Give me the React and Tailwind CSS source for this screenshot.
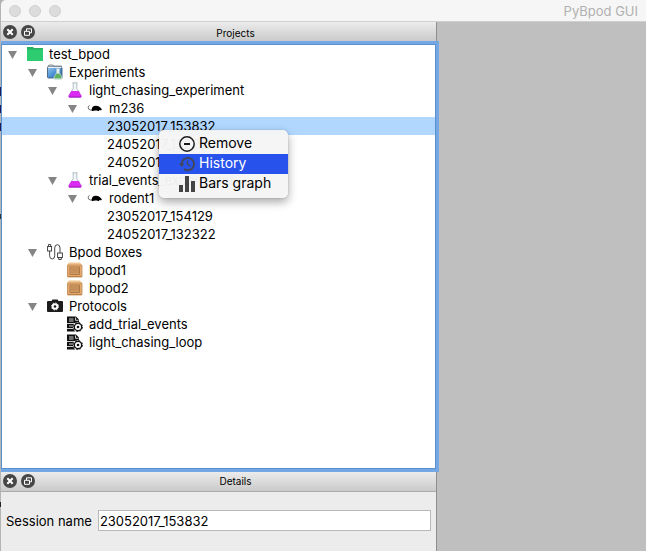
import React from "react";

function GreenFolder() {
  return (
    <svg viewBox="0 0 16 16" className="size-4">
      <path d="M0 1h6l1 1h9v13H0z" fill="#27b063" />
      <path d="M0 3.500h16V15H0z" fill="#2ecc71" />
    </svg>
  );
}

function LabFolder() {
  return (
    <svg viewBox="0 0 16 16" className="size-4">
      <defs>
        <linearGradient id="lab" x1="0" y1="0" x2="1" y2="1">
          <stop offset="0" stopColor="#9cc8ee" />
          <stop offset=".5" stopColor="#4d93d6" />
          <stop offset="1" stopColor="#2b62a6" />
        </linearGradient>
      </defs>
      <path d="M1 3.500V2l1-1h4l1 1h7.500v2z" fill="#cfd3d6" stroke="#5f676e" strokeWidth=".7" />
      <rect x=".5" y="3" width="14.500" height="11" rx="1" fill="url(#lab)" stroke="#44607c" strokeWidth=".9" />
      <path d="M1 3.500h13.500" stroke="#e9eef2" />
      <path d="M9.500 4.500h3v4l3 5.500-1 1.300h-7l-1-1.300 3-5.500z" fill="#e3f0ee" stroke="#a9c3c8" strokeWidth=".5" />
      <path d="M9.300 9.500h3.400l2.100 4.300-.6.700H7.800l-.6-.7z" fill="#62b264" />
    </svg>
  );
}

function Flask() {
  return (
    <svg viewBox="0 0 16 16" className="size-4">
      <path d="M5.500.8h5M6.200 1v5.500L2 13.500q-.7 1.800 1 1.800h10q1.700 0 1-1.800L9.800 6.500V1" fill="#f1f6f8" stroke="#a9b8bf" strokeWidth=".9" />
      <path d="M4.300 9h7.400l2.800 4.800q.5 1.600-1 1.600H2.500q-1.500 0-1-1.600z" fill="#d92bf2" />
      <path d="M2 14.900h12" stroke="#a31fc0" strokeWidth=".9" />
    </svg>
  );
}

function Mouse() {
  return (
    <svg viewBox="0 0 16 16" className="size-4">
      <path d="M2.600 5.500Q1 6 1.200 7.800t2.300 2.200H8" fill="none" stroke="#444" strokeWidth=".8" />
      <path d="M4.600 10Q4.800 5.800 8.800 5.700q3-.1 4.500 1.800l1.500 1.700q.3.800-1 1l-1.800.1v.7h-1.500v-.6H6.500v.5H5z" fill="#000" />
    </svg>
  );
}

function Cable() {
  return (
    <svg viewBox="0 0 16 16" className="size-4" fill="none" stroke="#333" strokeWidth=".9">
      <rect x=".6" y="2.500" width="4" height="4.500" />
      <path d="M1.500 2.500v-2h2.200v2M2.600 7v4.500Q2.600 15 5.200 15T7.700 11.500V4Q7.700.7 10.300.7t2.700 3.300V9" />
      <rect x="10.600" y="9" width="4.800" height="4.500" />
      <path d="M11.700 13.500v2h2.600v-2" />
    </svg>
  );
}

function Crate() {
  return (
    <svg viewBox="0 0 16 16" className="size-4">
      <path d="M2 .5h11L15 3v11.500H0V3z" fill="#f0c592" />
      <rect x=".5" y="3" width="14.500" height="12" rx=".5" fill="#e2aa70" stroke="#c48b54" strokeWidth=".8" />
      <rect x="3" y="5" width="9.500" height="7.500" fill="#dda76f" stroke="#a36c3a" strokeWidth=".8" />
      <path d="M5 6v5.500M7 6v5.500M9 6v5.500M11 6v5.500" stroke="#a36c3a" strokeWidth=".8" />
      <path d="M1 14.500h13.500" stroke="#b67a40" strokeWidth=".8" />
    </svg>
  );
}

function CameraGear() {
  return (
    <svg viewBox="0 0 16 16" className="size-4">
      <path d="M0 4q0-1 1-1h3.500l1-1.500h5l1 1.500H15q1 0 1 1v9q0 1-1 1H1q-1 0-1-1z" fill="#1c1c1c" />
      <circle cx="8" cy="8.500" r="2.300" fill="none" stroke="#fff" strokeWidth="2" />
      <circle cx="8" cy="8.500" r="3.500" fill="none" stroke="#fff" strokeWidth="1" strokeDasharray="1.370 1.370" />
    </svg>
  );
}

function ScriptGear() {
  return (
    <svg viewBox="0 0 16 16" className="size-4">
      <path d="M0 .5h9l3 3V8L8 15.500H0z" fill="#111" />
      <path d="M2 3h4.500M2 5h4.500M0 7.500h8M2 10h4M0 12.500h6" stroke="#fff" strokeWidth=".8" />
      <path d="M8.500 1.500v2.800h3" fill="none" stroke="#fff" strokeWidth=".8" />
      <circle cx="11" cy="11" r="5" fill="#fff" />
      <circle cx="11" cy="11" r="3.700" fill="none" stroke="#111" strokeWidth="1.400" />
      <circle cx="11" cy="11" r="4.500" fill="none" stroke="#111" strokeWidth=".9" strokeDasharray="1.770 1.765" />
      <circle cx="11" cy="11" r="1.300" fill="#111" />
    </svg>
  );
}

function RemoveIcon() {
  return (
    <svg viewBox="0 0 16 16" className="size-4" fill="none" stroke="#1c1c1c">
      <circle cx="8" cy="8" r="7.200" strokeWidth="1.500" />
      <path d="M5 8h6" strokeWidth="1.800" />
    </svg>
  );
}

function HistoryIcon() {
  return (
    <svg viewBox="0 0 16 16" className="size-4" fill="none" stroke="#414757">
      <path d="M2.600 8A6.200 6.200 0 1 1 5 13" strokeWidth="1.900" />
      <path d="M0 7.500h5.400L2.700 11z" fill="#414757" stroke="none" />
      <path d="M8.500 4.500V8l2.800 2.300" strokeWidth="1.300" />
    </svg>
  );
}

function BarsIcon() {
  return (
    <svg viewBox="0 0 16 16" className="size-4" fill="#444">
      <path d="M0 9h4v7H0zM6 0h4v16H6zM12 5h4v11h-4z" />
    </svg>
  );
}

const rows = [
  { label: "test_bpod", indent: "pl-[5px]", icon: GreenFolder, open: true },
  { label: "Experiments", indent: "pl-[25px]", icon: LabFolder, open: true },
  { label: "light_chasing_experiment", indent: "pl-[45px]", icon: Flask, open: true },
  { label: "m236", indent: "pl-[65px]", icon: Mouse, open: true },
  { label: "23052017_153832", indent: "pl-[105px]", selected: true },
  { label: "24052017_132211", indent: "pl-[105px]" },
  { label: "24052017_132256", indent: "pl-[105px]" },
  { label: "trial_events_experiment", indent: "pl-[45px]", icon: Flask, open: true },
  { label: "rodent1", indent: "pl-[65px]", icon: Mouse, open: true },
  { label: "23052017_154129", indent: "pl-[105px]" },
  { label: "24052017_132322", indent: "pl-[105px]" },
  { label: "Bpod Boxes", indent: "pl-[25px]", icon: Cable, open: true },
  { label: "bpod1", indent: "pl-[65px]", icon: Crate },
  { label: "bpod2", indent: "pl-[65px]", icon: Crate },
  { label: "Protocols", indent: "pl-[25px]", icon: CameraGear, open: true },
  { label: "add_trial_events", indent: "pl-[65px]", icon: ScriptGear },
  { label: "light_chasing_loop", indent: "pl-[65px]", icon: ScriptGear },
];

function TreeRow({ label, indent, icon: Icon, open, selected }) {
  return (
    <li className={`flex h-[18px] items-center ${indent} ${selected ? "bg-[#b1d7ff]" : ""}`}>
      {open && (
        <button aria-label={`Collapse ${label}`} className="flex w-5 shrink-0 pt-px pl-px">
          <svg viewBox="0 0 9 8" className="h-2 w-[9px]">
            <path d="M0 0h9L4.500 8z" fill="#858585" />
          </svg>
        </button>
      )}
      {Icon && (
        <span className="mr-1.5 shrink-0">
          <Icon />
        </span>
      )}
      <span className="pt-0.5 whitespace-nowrap">{label}</span>
    </li>
  );
}

function PanelHeader({ title, spacing }) {
  return (
    <header className={`flex h-5 shrink-0 items-center border-b border-[#aaa] bg-linear-to-b from-[#ececec] to-[#cacaca] pl-0.5 text-[10px] ${spacing}`}>
      <div className="flex gap-1">
        <button aria-label={`Close ${title}`}>
          <svg viewBox="0 0 14 14" className="size-3.5">
            <circle cx="7" cy="7" r="7" fill="#464646" />
            <path d="M4.300 4.300l5.400 5.400M9.700 4.300L4.300 9.700" stroke="#fff" strokeWidth="2" />
          </svg>
        </button>
        <button aria-label={`Float ${title}`}>
          <svg viewBox="0 0 14 14" className="size-3.5">
            <circle cx="7" cy="7" r="7" fill="#464646" />
            <path d="M5.500 6V3.800h5v4H8.800M3.500 6.300h5v4h-5z" fill="none" stroke="#fff" />
          </svg>
        </button>
      </div>
      <h2 className="flex-1 pt-0.5 text-center">{title}</h2>
    </header>
  );
}

function MenuItem({ icon: Icon, label, tone = "" }) {
  return (
    <button role="menuitem" className={`flex h-5 w-full items-center gap-1 pl-5 text-left ${tone}`}>
      <Icon />
      <span className="pb-0.5">{label}</span>
    </button>
  );
}

function ContextMenu() {
  return (
    <div role="menu" className="absolute top-[85px] left-[157px] w-[129px] rounded-[5px] bg-[#f5f5f5]/97 py-1 text-[14px] leading-5 shadow-[0_0_1px_rgba(0,0,0,0.45),0_4px_10px_rgba(0,0,0,0.35)]">
      <MenuItem icon={RemoveIcon} label="Remove" />
      <MenuItem icon={HistoryIcon} label="History" tone="bg-[#2852ec] text-white" />
      <MenuItem icon={BarsIcon} label="Bars graph" />
    </div>
  );
}

export default function App() {
  return (
    <div className="h-screen bg-[#b4b4b4] bg-[linear-gradient(#b4b4b4_87px,#1c1c5c_87px,#1c1c5c_96px,#b4b4b4_96px,#b4b4b4_105px,#1c1c5c_105px,#1c1c5c_113px,#b4b4b4_113px,#b4b4b4_123px,#1c1c5c_123px,#1c1c5c_131px,#b4b4b4_131px,#b4b4b4_214px,#333_214px,#333_219px,#b4b4b4_219px,#b4b4b4_502px,#222_502px,#222_507px,#b4b4b4_507px)] pl-px font-['Inter','Liberation_Sans',sans-serif] text-[13px] text-black">
      <div className="flex h-full flex-col overflow-hidden rounded-tl-[5px] bg-[#bfbfbf]">
        <div className="flex h-[22px] shrink-0 items-center border-b border-[#cfcfcf] bg-[#f6f6f6] pr-2 pl-2">
          <div className="flex gap-2">
            <button aria-label="Close" className="size-3 rounded-full border border-[#cfcfcf] bg-[#dcdcdc]" />
            <button aria-label="Minimize" className="size-3 rounded-full border border-[#cfcfcf] bg-[#dcdcdc]" />
            <button aria-label="Zoom" className="size-3 rounded-full border border-[#cfcfcf] bg-[#dcdcdc]" />
          </div>
          <h1 className="ml-auto pt-0.5 text-[#b1b1b1]">PyBpod GUI</h1>
        </div>
        <main className="flex min-h-0 flex-1">
          <div className="flex w-[436px] shrink-0 flex-col border-r border-[#8e8e8e] bg-[#ececec]">
            <PanelHeader title="Projects" spacing="pt-px" />
            <section className="relative z-10 mt-0.5 mb-[3px] min-h-0 flex-1 border border-[#5890d0] bg-white shadow-[0_0_0_3px_#74a7e4]">
              <ul>
                {rows.map((row) => (
                  <TreeRow key={row.label} {...row} />
                ))}
              </ul>
              <ContextMenu />
            </section>
            <PanelHeader title="Details" spacing="pb-px" />
            <form className="flex items-center gap-1.5 pt-[18px] pr-[5px] pb-5 pl-[5px]">
              <label htmlFor="session" className="pt-0.5 whitespace-nowrap">Session name</label>
              <input id="session" defaultValue="23052017_153832" className="h-[21px] min-w-0 flex-1 border border-[#b9b9b9] bg-white px-px pt-px outline-none" />
            </form>
          </div>
        </main>
      </div>
    </div>
  );
}
